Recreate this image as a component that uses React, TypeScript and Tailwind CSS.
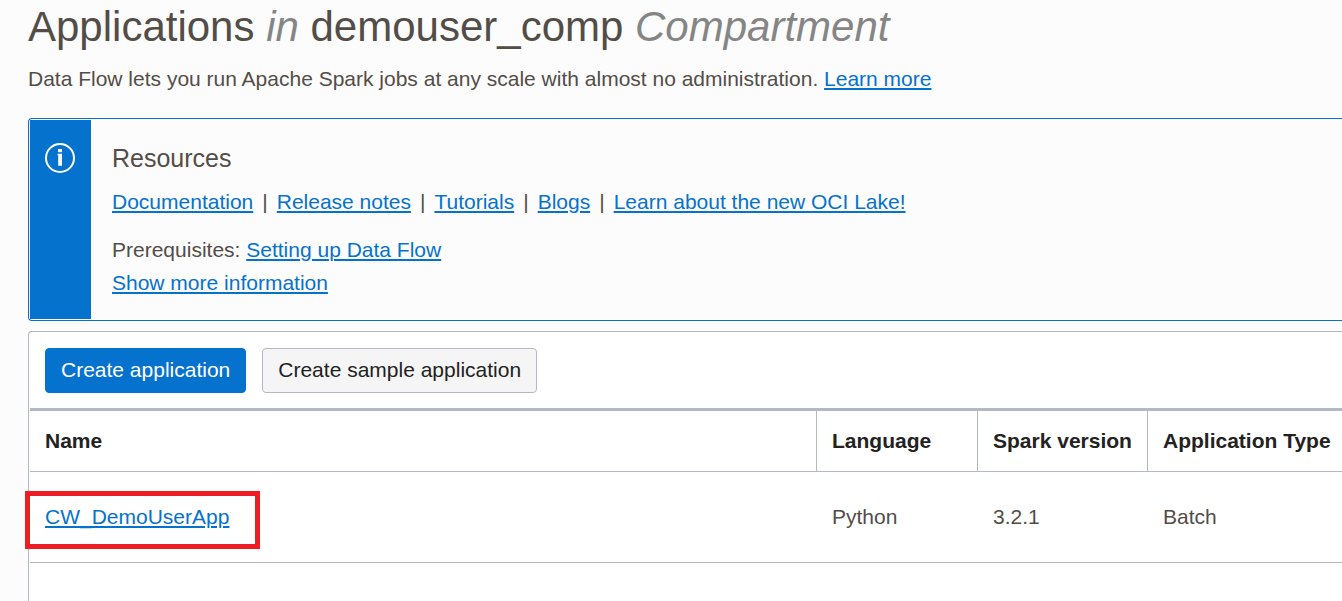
import type { ReactNode } from "react";

const resourceLinks = [
  "Documentation",
  "Release notes",
  "Tutorials",
  "Blogs",
  "Learn about the new OCI Lake!",
];

const applications = [
  { name: "CW_DemoUserApp", language: "Python", spark: "3.2.1", type: "Batch" },
];

function Link({ children }: { children: ReactNode }) {
  return (
    <a href="#" className="text-[#0572ce] underline decoration-2 underline-offset-2">
      {children}
    </a>
  );
}

function InfoIcon() {
  return (
    <svg width="30" height="30" viewBox="0 0 30 30" fill="none" aria-hidden="true">
      <circle cx="15" cy="15" r="14" stroke="white" strokeWidth="2" />
      <rect x="13" y="6" width="4" height="3.2" fill="white" />
      <path d="M12.6 10.8H17V22.7H13.2V12.2H12.6Z" fill="white" />
    </svg>
  );
}

function ResourcesPanel() {
  return (
    <section className="mt-[23px] flex rounded-l border border-r-0 border-[#0572ce] p-px pr-0">
      <div className="w-[61px] shrink-0 bg-[#0572ce] pt-[23px] pl-[15px]">
        <InfoIcon />
      </div>
      <div className="px-[21px] pt-[22px] pb-5">
        <h2 className="text-[25px] leading-8">Resources</h2>
        <nav className="mt-[11px] flex flex-wrap">
          {resourceLinks.map((label, i) => (
            <span key={label} className="flex">
              {i > 0 && <span className="px-[9px]">|</span>}
              <Link>{label}</Link>
            </span>
          ))}
        </nav>
        <p className="mt-[15px]">
          Prerequisites: <Link>Setting up Data Flow</Link>
        </p>
        <p>
          <Link>Show more information</Link>
        </p>
      </div>
    </section>
  );
}

function ApplicationsTable() {
  const firstHead = "border-b border-[#b3b9c2] px-[15px] pb-[2px] text-left font-bold";
  const head =
    "border-b border-l border-[#b3b9c2] pb-[2px] pl-[15px] text-left font-bold whitespace-nowrap";
  const firstCell = "relative border-b border-[#b3b9c2] px-[15px] pb-[2px] text-left";
  const cell = "border-b border-[#b3b9c2] px-4 pb-[2px] text-left";
  return (
    <table className="w-full table-fixed border-separate border-spacing-0 border-t-3 border-[#b3b9c2]">
      <colgroup>
        <col />
        <col className="w-[161px]" />
        <col className="w-[170px]" />
        <col className="w-[195px]" />
      </colgroup>
      <thead>
        <tr className="h-[61px] text-[#222222]">
          <th scope="col" className={firstHead}>Name</th>
          <th scope="col" className={head}>Language</th>
          <th scope="col" className={head}>Spark version</th>
          <th scope="col" className={head}>Application Type</th>
        </tr>
      </thead>
      <tbody>
        {applications.map((app) => (
          <tr key={app.name} className="h-[91px]">
            <td className={firstCell}>
              <Link>{app.name}</Link>
              <div className="pointer-events-none absolute top-[19px] -left-[5px] h-[58px] w-[235px] border-5 border-[#ee1c25]" />
            </td>
            <td className={cell}>{app.language}</td>
            <td className={cell}>{app.spark}</td>
            <td className={cell}>{app.type}</td>
          </tr>
        ))}
      </tbody>
    </table>
  );
}

export default function App() {
  return (
    <main className="flex min-h-screen flex-col bg-[#fcfcfc] pl-7 font-['Liberation_Sans',Arial,sans-serif] text-[21px] leading-[33px] text-[#534d48]">
      <h1 className="text-[42px] leading-[54px]">
        Applications <em className="text-[#858585]">in</em> demouser_comp{" "}
        <em className="text-[#858585]">Compartment</em>
      </h1>
      <p className="mt-2">
        Data Flow lets you run Apache Spark jobs at any scale with almost no administration.{" "}
        <Link>Learn more</Link>
      </p>
      <ResourcesPanel />
      <section className="mt-[10px] flex-1 rounded-tl border-t border-l border-[#b3b9c2] bg-white">
        <div className="flex flex-wrap gap-4 px-4 pt-4 pb-[15px]">
          <button
            type="button"
            className="h-[45px] rounded border border-[#0572ce] bg-[#0572ce] px-[15px] pb-[2px] text-white"
          >
            Create application
          </button>
          <button
            type="button"
            className="h-[45px] rounded border border-[#b3b9c2] bg-[#f5f5f5] px-[15px] pb-[2px] text-[#222222]"
          >
            Create sample application
          </button>
        </div>
        <div className="pl-px">
          <ApplicationsTable />
        </div>
      </section>
    </main>
  );
}
